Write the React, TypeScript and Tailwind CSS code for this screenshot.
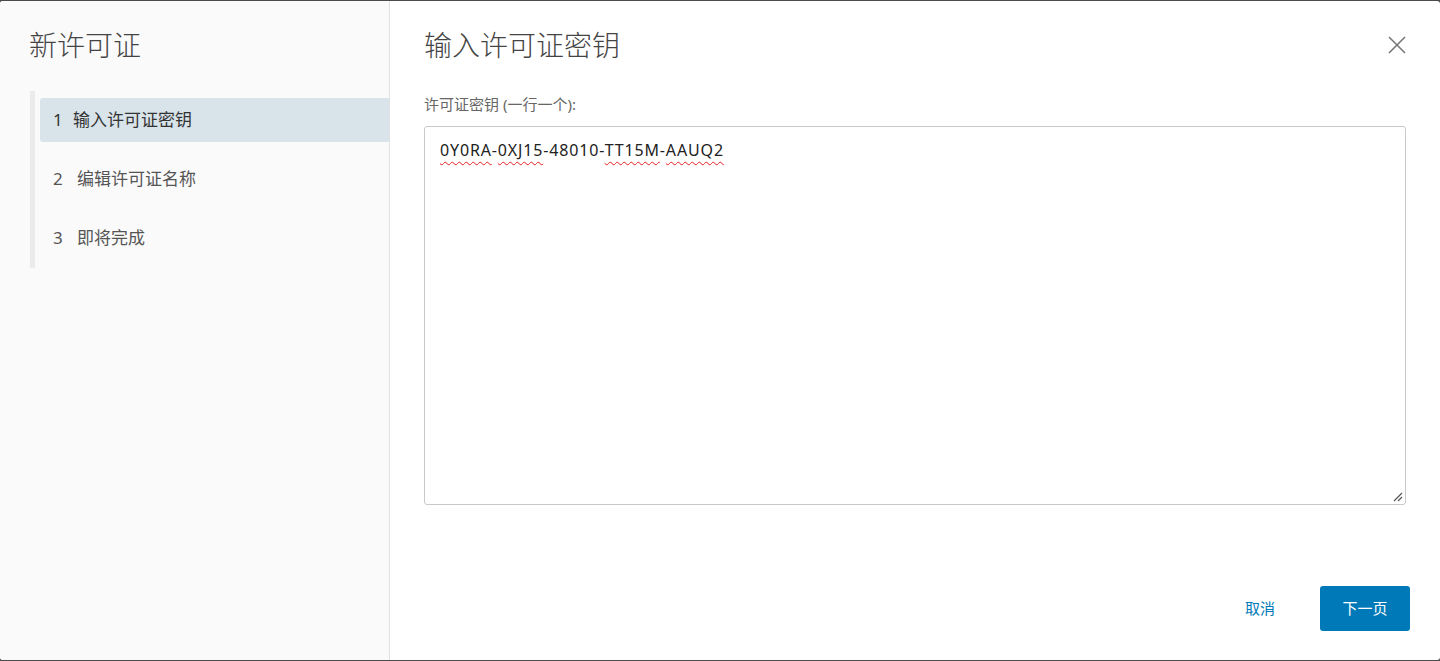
const STEPS = [
  { n: 1, label: "输入许可证密钥", active: true },
  { n: 2, label: "编辑许可证名称", active: false },
  { n: 3, label: "即将完成", active: false },
];

const KEY_PARTS = [
  { text: "0Y0RA", misspelled: true },
  { text: "-", misspelled: false },
  { text: "0XJ15", misspelled: true },
  { text: "-48010-", misspelled: false },
  { text: "TT15M", misspelled: true },
  { text: "-", misspelled: false },
  { text: "AAUQ2", misspelled: true },
];

const FONT = "font-['Noto_Sans','Noto_Sans_CJK_SC',sans-serif]";

export default function App() {
  return (
    <div className={`h-[661px] w-[1440px] bg-[#4a4a4a] py-px ${FONT}`}>
      <div className="flex h-full overflow-hidden rounded-[3px] bg-white">
        {/* Steps sidebar */}
        <aside className="w-[390px] shrink-0 border-r border-[#e2e2e2] bg-[#fafafa]">
          <h2 className="pl-[29px] pt-[26px] text-[28px] font-light leading-9 text-[#444]">新许可证</h2>
          <div className="ml-[30px] mt-[28px] border-l-[5px] border-[#ebebeb] pb-[8px] pt-[7px] pl-[5px]">
            <ul className="flex flex-col gap-[15px]">
              {STEPS.map((step) => (
                <li
                  key={step.n}
                  className={`flex h-[44px] items-center rounded-l-[3px] pl-[13px] text-[17px] ${
                    step.active ? "bg-[#d8e3ea] text-[#333]" : "text-[#555]"
                  }`}
                >
                  <span className={step.active ? "w-[20px]" : "w-[24px]"}>{step.n}</span>
                  <span>{step.label}</span>
                </li>
              ))}
            </ul>
          </div>
        </aside>

        {/* Content */}
        <main className="flex flex-1 flex-col pl-[34px] pr-[30px]">
          <div className="flex items-center justify-between pt-[26px]">
            <h3 className="text-[28px] font-light leading-9 text-[#444]">输入许可证密钥</h3>
            <button className="mr-[3px] text-[#777]" aria-label="关闭">
              <svg width="20" height="20" viewBox="0 0 20 20" fill="none" stroke="currentColor" strokeWidth="1.6">
                <path d="M2 2L18 18M18 2L2 18" />
              </svg>
            </button>
          </div>

          <label className="mt-[31px] text-[15px] leading-5 text-[#666]">许可证密钥 (一行一个):</label>

          <div className="relative mt-[12px] h-[379px] w-[982px] rounded-[3px] border border-[#c9c9c9] px-[15px] pt-[11px] text-[16px] leading-6 tracking-[0.85px] text-[#222]">
            {KEY_PARTS.map((part, i) => (
              <span
                key={i}
                className={
                  part.misspelled
                    ? "underline decoration-[#e52020] decoration-wavy decoration-1 underline-offset-[5px]"
                    : ""
                }
              >
                {part.text}
              </span>
            ))}
            <svg
              className="absolute bottom-[2px] right-[2px]"
              width="10"
              height="10"
              viewBox="0 0 10 10"
              stroke="#555"
              strokeWidth="1.2"
            >
              <path d="M1 9L9 1M5 9L9 5" />
            </svg>
          </div>

          <div className="mt-auto mb-[29px] flex items-center justify-end gap-[45px]">
            <button className="text-[15px] text-[#0079b8]">取消</button>
            <button className="h-[45px] w-[90px] rounded-[3px] bg-[#0079b8] text-[15px] text-white">下一页</button>
          </div>
        </main>
      </div>
    </div>
  );
}
